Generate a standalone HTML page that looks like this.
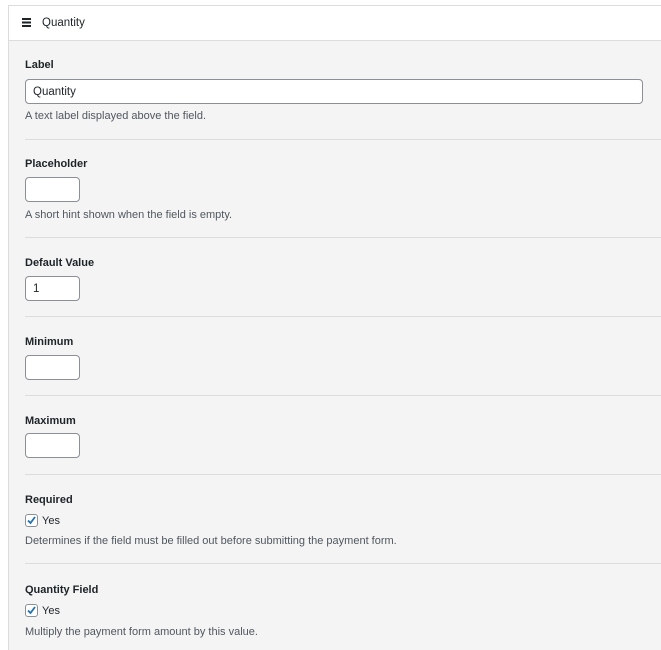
<!DOCTYPE html>
<html><head><style>
html,body{margin:0;width:661px;height:650px;overflow:hidden}
body{background:#fff;font-family:"Liberation Sans",sans-serif;font-size:12px;color:#1d2327;position:relative}
.box{position:absolute;left:8px;top:5px;width:653px;height:645px;border-left:1px solid #dcdcde;border-top:1px solid #dcdcde;background:#f4f4f4;box-sizing:border-box}
.hdr{position:absolute;left:9px;top:6px;width:652px;height:34px;background:#fff;border-bottom:1px solid #dcdcde}
.a{position:absolute;white-space:nowrap}
.t{font-weight:bold;font-size:11px}
.h{color:#50575e;font-size:11px}
.in{position:absolute;background:#fff;border:1px solid #8c8f94;border-radius:4px;box-sizing:border-box;height:25px;padding:6px 7px 0;font-size:11.5px}
.sep{position:absolute;left:25px;right:0;height:1px;background:#dcdcde}
.cb{position:absolute;width:13px;height:13px;border:1px solid #8c8f94;border-radius:3px;background:#fff;box-sizing:border-box}
</style></head><body>
<div class="box"></div>
<div class="hdr"></div>
<svg class="a" style="left:22px;top:18px" width="9" height="9"><rect x="0" y="0" width="9" height="2" fill="#1d2327"/><rect x="0" y="3.5" width="9" height="2" fill="#1d2327"/><rect x="0" y="7" width="9" height="2" fill="#1d2327"/></svg>
<div class="a" style="left:42px;top:17px;font-size:11.5px">Quantity</div>

<div class="a t" style="left:25px;top:59px">Label</div>
<div class="in" style="left:25px;top:79px;width:618px">Quantity</div>
<div class="a h" style="left:25px;top:110px">A text label displayed above the field.</div>
<div class="sep" style="top:139px"></div>

<div class="a t" style="left:25px;top:158px">Placeholder</div>
<div class="in" style="left:25px;top:177px;width:55px"></div>
<div class="a h" style="left:25px;top:209px">A short hint shown when the field is empty.</div>
<div class="sep" style="top:237px"></div>

<div class="a t" style="left:25px;top:257px">Default Value</div>
<div class="in" style="left:25px;top:276px;width:55px">1</div>
<div class="sep" style="top:316px"></div>

<div class="a t" style="left:25px;top:336px">Minimum</div>
<div class="in" style="left:25px;top:355px;width:55px"></div>
<div class="sep" style="top:395px"></div>

<div class="a t" style="left:25px;top:415px">Maximum</div>
<div class="in" style="left:25px;top:433px;width:55px"></div>
<div class="sep" style="top:474px"></div>

<div class="a t" style="left:25px;top:494px">Required</div>
<div class="cb" style="left:25px;top:514px"><svg width="11" height="11" style="position:absolute;left:0;top:0"><path d="M2 5.5 L4.5 8 L9 2" stroke="#2271b1" stroke-width="1.8" fill="none"/></svg></div>
<div class="a" style="left:42px;top:515px;font-size:11px">Yes</div>
<div class="a h" style="left:25px;top:535px">Determines if the field must be filled out before submitting the payment form.</div>
<div class="sep" style="top:563px"></div>

<div class="a t" style="left:25px;top:584px">Quantity Field</div>
<div class="cb" style="left:25px;top:604px"><svg width="11" height="11" style="position:absolute;left:0;top:0"><path d="M2 5.5 L4.5 8 L9 2" stroke="#2271b1" stroke-width="1.8" fill="none"/></svg></div>
<div class="a" style="left:42px;top:605px;font-size:11px">Yes</div>
<div class="a h" style="left:25px;top:626px">Multiply the payment form amount by this value.</div>
</body></html>
